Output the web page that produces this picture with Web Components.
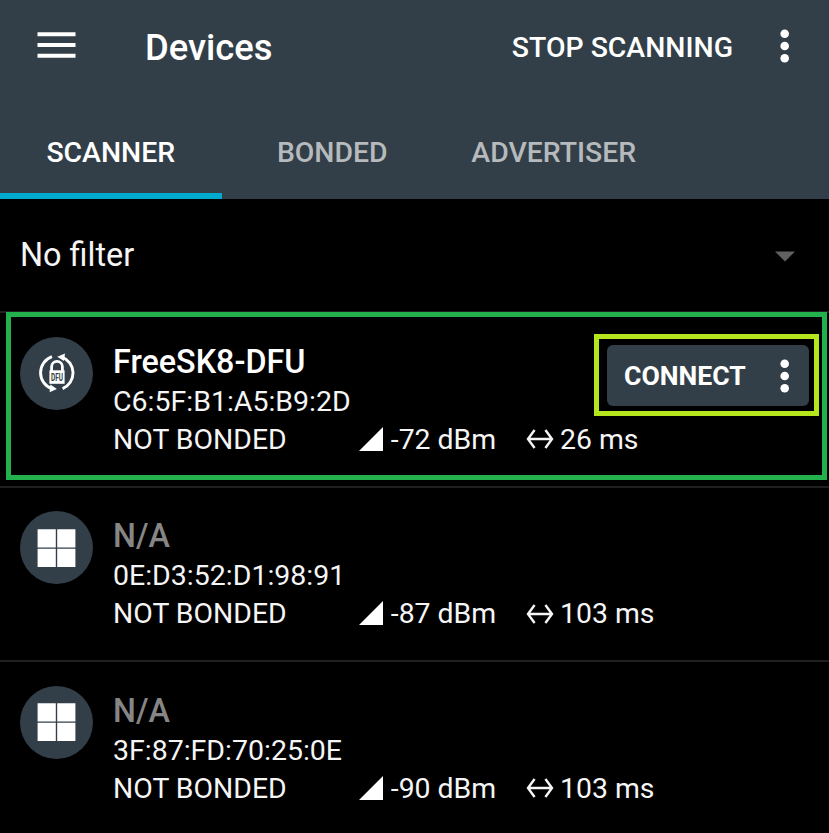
<!DOCTYPE html>
<html lang="en">
<head>
<meta charset="utf-8">
<title>Devices</title>
<style>
html,body{margin:0;height:100%;background:#000}
body{overflow:hidden;font-family:Roboto,"Liberation Sans",sans-serif;color:#f5f5f5}
</style>
</head>
<body>
<scanner-app>
  <app-bar slot="header" heading="Devices" action="STOP SCANNING"></app-bar>
  <tab-strip slot="header">
    <tab-item active>SCANNER</tab-item>
    <tab-item>BONDED</tab-item>
    <tab-item>ADVERTISER</tab-item>
  </tab-strip>
  <filter-bar>No filter</filter-bar>
  <device-row name="FreeSK8-DFU" address="C6:5F:B1:A5:B9:2D" rssi="-72 dBm" interval="26 ms" kind="dfu" highlighted>
    <connect-button slot="action">CONNECT</connect-button>
  </device-row>
  <device-row address="0E:D3:52:D1:98:91" rssi="-87 dBm" interval="103 ms" kind="windows"></device-row>
  <device-row address="3F:87:FD:70:25:0E" rssi="-90 dBm" interval="103 ms" kind="windows"></device-row>
</scanner-app>
<script>
function define(name, render) {
  customElements.define(name, class extends HTMLElement {
    constructor() { super(); this.attachShadow({ mode: 'open' }); }
    connectedCallback() { this.shadowRoot.innerHTML = render(this); }
  });
}

define('more-dots', () => `
  <style>:host{display:block;width:10px;height:34px}svg{display:block}</style>
  <svg width="10" height="34" viewBox="0 0 10 34" fill="#fff"><circle cx="4.7" cy="4.8" r="4.3"/><circle cx="4.7" cy="17" r="4.3"/><circle cx="4.7" cy="29.2" r="4.3"/></svg>`);

define('app-bar', el => `
  <style>
    :host{display:flex;align-items:center;height:95px;box-sizing:border-box;padding:0 39px 0 37px;color:#fff;font-weight:500}
    svg{display:block;margin-bottom:5px}
    h1{margin:0 0 0 69px;font-size:36.4px;font-weight:500;line-height:44px}
    button{all:unset;margin-left:auto;font-size:28.4px;line-height:34px}
    more-dots{margin:0 0 3px 47px}
  </style>
  <svg width="39" height="26" viewBox="0 0 39 26" fill="#fff"><path d="M.5 .2h38v4H.5zM.5 10.9h38v4H.5zM.5 21.7h38v4H.5z"/></svg>
  <h1>${el.getAttribute('heading')}</h1>
  <button>${el.getAttribute('action')}</button>
  <more-dots></more-dots>`);

define('tab-strip', () => `
  <style>:host{display:grid;grid-template-columns:repeat(3,221.5px);height:104px}</style><slot></slot>`);

define('tab-item', () => `
  <style>
    :host{display:flex;justify-content:center;align-items:center;box-sizing:border-box;padding-top:17px;border-bottom:6px solid transparent;color:#b6babd;font-size:28.4px;font-weight:500;line-height:34px}
    :host([active]){color:#fff;border-color:#00a9ce}
  </style><slot></slot>`);

define('filter-bar', () => `
  <style>
    :host{display:flex;align-items:center;justify-content:space-between;height:112.25px;box-sizing:border-box;padding:0 34px 0 20px;font-size:32.4px;line-height:38px}
    svg{display:block;margin-top:3px}
  </style>
  <span><slot></slot></span>
  <svg width="20" height="11" viewBox="0 0 20 11" fill="#616161"><path d="M0 .4h20L10 10.6z"/></svg>`);

define('connect-button', () => `
  <style>
    :host{display:block;box-sizing:border-box;width:225px;height:82px;border:5px solid #b5e61d;padding:6px 5px 5px 8px}
    button{all:unset;display:flex;align-items:center;justify-content:space-between;box-sizing:border-box;width:202px;height:61px;padding:0 19px 0 17px;border-radius:6px;background:#333f48;color:#fff;font-size:26.6px;font-weight:700;line-height:32px}
    span{margin-top:1px}
  </style>
  <button><span><slot></slot></span><more-dots></more-dots></button>`);

const icons = {
  dfu: `<svg width="40" height="40" viewBox="-1 0 40 40">
    <g fill="none" stroke="#fff" stroke-width="2.9"><path d="M15 3.7A17 17 0 0 0 15.5 36"/><path d="M25 4A17 17 0 0 1 25.6 35.6"/></g>
    <path fill="#fff" d="M20.2 3.7 28 .6 27 8zM19.9 35.9 12.6 39.2 13.4 31.6z"/>
    <path fill="none" stroke="#fff" stroke-width="2.8" d="M14.6 19V13.8a5.4 5.4 0 0 1 10.8 0V19"/>
    <path fill="#fff" d="M12.4 17.3h15.2v13.5H12.4z"/>
    <text x="20" y="28.2" text-anchor="middle" textLength="12" lengthAdjust="spacingAndGlyphs" font-family="Roboto,sans-serif" font-weight="700" font-size="10.5" fill="#333f48">DFU</text>
  </svg>`,
  windows: `<svg width="40" height="40" viewBox="-.4 0 40 40" fill="#fff"><path d="M1.2 1.3h18.2v18.2H1.2zM20.8 1.3H39v18.2H20.8zM1.2 20.8h18.2V39H1.2zM20.8 20.8H39V39H20.8z"/></svg>`
};

define('device-avatar', el => `
  <style>:host{display:grid;place-items:center;width:73px;height:73px;border-radius:50%;background:#333f48}svg{display:block;margin-right:1px}</style>
  ${icons[el.getAttribute('kind')]}`);

define('device-row', el => `
  <style>
    :host{display:grid;grid-template-columns:73px 1fr;column-gap:20px;position:relative;height:174.6px;box-sizing:border-box;padding:23.5px 0 0 20px;border-top:2px solid #202020}
    .name{margin-top:4.15px;height:42px;font-size:32.3px;font-weight:500;line-height:42px;color:#fff}
    .name.unknown{color:#868686}
    .line{height:38px;font-size:28.5px;line-height:38px;white-space:nowrap}
    .info{display:grid;grid-template-columns:246px 167px auto;font-size:28.4px}
    .cell{display:flex;align-items:center}
    .signal{margin:0 7.8px 2px 0}
    .gap{margin:0 6px 1.5px 0}
    .outline{position:absolute;left:6px;top:-1px;width:821px;height:168px;box-sizing:border-box;border:5px solid #22b14c;pointer-events:none}
    ::slotted([slot=action]){position:absolute;left:594px;top:21px}
  </style>
  <device-avatar kind="${el.getAttribute('kind')}"></device-avatar>
  <div>
    <div class="name ${el.hasAttribute('name') ? '' : 'unknown'}">${el.getAttribute('name') || 'N/A'}</div>
    <div class="line">${el.getAttribute('address')}</div>
    <div class="line info">
      <span>NOT BONDED</span>
      <span class="cell"><svg class="signal" width="24" height="24" viewBox="0 0 24 24" fill="#fff"><path d="M24 0v24H0z"/></svg>${el.getAttribute('rssi')}</span>
      <span class="cell"><svg class="gap" width="28" height="20" viewBox="0 0 28 20" fill="none" stroke="#f5f5f5" stroke-width="2.4"><path d="M2 10h24M8.6 1 2 10l6.6 9M19.4 1 26 10l-6.6 9"/></svg>${el.getAttribute('interval')}</span>
    </div>
  </div>
  ${el.hasAttribute('highlighted') ? '<div class="outline"></div>' : ''}
  <slot name="action"></slot>`);

define('scanner-app', () => `
  <style>
    :host{display:flex;flex-direction:column;width:829px;height:833px;overflow:hidden;background:#000}
    header{height:199px;flex:none;background:#333f48}
    main{display:flex;flex-direction:column}
    main ::slotted(*){flex:none}
  </style>
  <header><slot name="header"></slot></header>
  <main><slot></slot></main>`);
</script>
</body>
</html>
